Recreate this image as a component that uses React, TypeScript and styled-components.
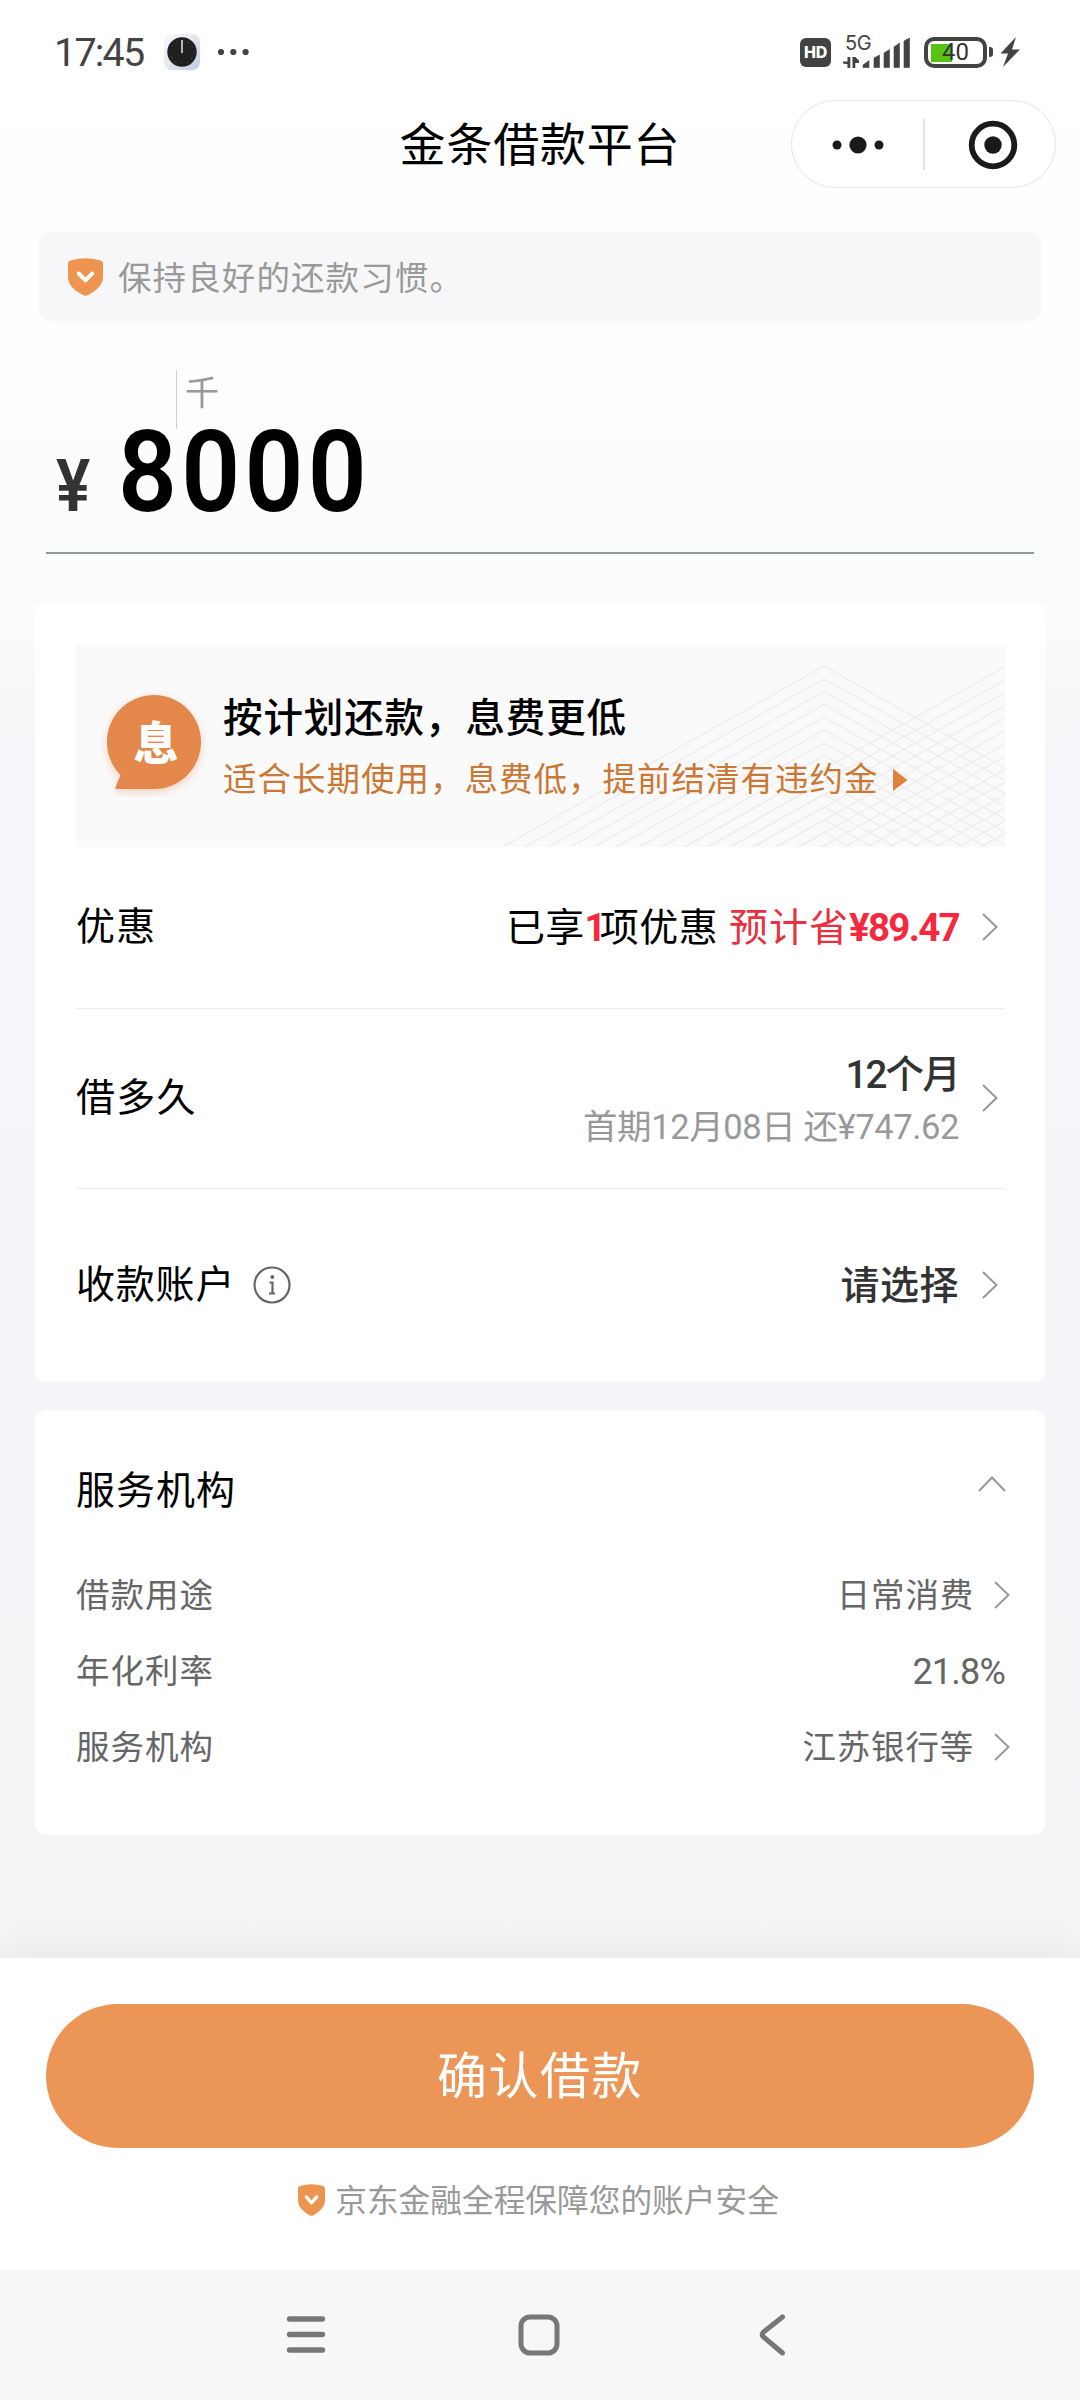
import React from 'react';
import styled, { createGlobalStyle } from 'styled-components';

const GlobalStyle = createGlobalStyle`
  * { box-sizing: border-box; }
  body {
    margin: 0;
    background: #fff;
    font-family: Roboto, "Noto Sans CJK SC", sans-serif;
    -webkit-font-smoothing: antialiased;
  }
`;

const Screen = styled.div`
  width: 1080px;
  height: 2400px;
  display: flex;
  flex-direction: column;
  overflow: hidden;
  background: linear-gradient(180deg, #ffffff 0, #fefefe 230px, #fbfcfc 560px, #f9fafa 640px, #f5f6f9 760px, #f4f5f7 1960px);
`;

interface TextProps {
  $size: number;
  $color?: string;
  $weight?: number;
  $spacing?: number;
  $drop?: number;
}
const Text = styled.span<TextProps>`
  display: block;
  white-space: nowrap;
  line-height: 1.2;
  padding-top: ${(p) => p.$drop ?? 0}px;
  font-size: ${(p) => p.$size}px;
  color: ${(p) => p.$color ?? '#000'};
  font-weight: ${(p) => p.$weight ?? 400};
  letter-spacing: ${(p) => p.$spacing ?? 0}px;
`;

/* ---------- status bar ---------- */
const StatusBar = styled.header`
  height: 100px;
  flex: none;
  display: flex;
  align-items: center;
  justify-content: space-between;
  padding: 4px 59px 0 54px;
`;
const StatusGroup = styled.div`
  display: flex;
  align-items: center;
`;
const AppIcon = styled.svg`
  margin-left: 21px;
`;
const MoreDots = styled.svg`
  margin-left: 17px;
`;
const HdBadge = styled.div`
  width: 31px;
  height: 29px;
  border-radius: 6px;
  background: #434343;
  color: #fff;
  font: 800 16px/29px Inter, sans-serif;
  text-align: center;
  letter-spacing: -0.3px;
`;
const Signal = styled.div`
  display: grid;
  margin-left: 12px;
  width: 67px;
  height: 34px;
  & > * { grid-area: 1 / 1; }
`;
const NetLabel = styled.span`
  font: 400 20px/17px Inter, sans-serif;
  letter-spacing: -0.5px;
  color: #434343;
  padding-left: 2px;
`;
const Battery = styled.div`
  display: flex;
  align-items: center;
  justify-content: center;
  width: 63px;
  height: 31px;
  margin-left: 14px;
  border: 4px solid #434343;
  border-radius: 10px;
  background: linear-gradient(90deg, #57c411 21px, transparent 21px) 3px 3px / 49px 18px no-repeat;
  font: 400 24px/23px Roboto, sans-serif;
  color: #333;
`;
const BatteryNub = styled.div`
  width: 4px;
  height: 10px;
  margin-left: 2px;
  border-radius: 0 3px 3px 0;
  background: #434343;
`;

/* ---------- title bar ---------- */
const TitleBar = styled.div`
  height: 88px;
  flex: none;
  display: grid;
  grid-template-columns: 1fr auto 1fr;
  align-items: center;
  padding: 0 24px;
`;
const Capsule = styled.div`
  grid-column: 3;
  justify-self: end;
  width: 265px;
  height: 88px;
  border: 1.5px solid #e6e6e6;
  border-radius: 44px;
  display: grid;
  grid-template-columns: 131px 2px 1fr;
  align-items: center;
  background: #fff;
`;
const CapsuleHalf = styled.div<{ $shift?: number }>`
  display: flex;
  justify-content: center;
  padding: 1px 0 0 ${(p) => p.$shift ?? 0}px;
`;
const CapsuleSplit = styled.div`
  width: 1.5px;
  height: 51px;
  background: #e4e4e4;
`;
const PageTitle = styled.h1`
  margin: 0;
  padding-top: 4px;
  font-size: 46px;
  font-weight: 400;
  line-height: 1.2;
  letter-spacing: 0.8px;
  color: #000;
`;

/* ---------- notice + amount ---------- */
const Notice = styled.div`
  flex: none;
  height: 89px;
  margin: 44px 39px 0;
  padding-left: 29px;
  border-radius: 12px;
  background: #f7f7fa;
  display: flex;
  align-items: center;
  gap: 15px;
`;
const AmountBox = styled.section`
  flex: none;
  height: 233px;
  margin: 0 46px;
  padding: 49px 0 0 10px;
  border-bottom: 2px solid #929997;
  display: flex;
  flex-direction: column;
`;
const UnitTag = styled.div`
  height: 59px;
  margin-left: 120px;
  padding: 0 0 13px 8px;
  border-left: 1px solid #d0d0d0;
  display: flex;
  align-items: center;
`;
const Unit = styled.span`
  font-size: 34px;
  line-height: 40px;
  color: #999;
`;
const AmountLine = styled.div`
  display: flex;
  align-items: baseline;
  height: 86px;
  line-height: 86px;
`;
const Currency = styled.span`
  font-size: 73px;
  font-weight: 600;
  color: #333;
  width: 62px;
  display: inline-block;
  transform: scaleX(0.88);
  transform-origin: left;
`;
const AmountValue = styled.span`
  font-size: 114px;
  font-weight: 600;
  letter-spacing: 4.8px;
  color: #000;
  transform: scaleX(0.905);
  transform-origin: left;
`;

/* ---------- cards ---------- */
const Card = styled.section<{ $height: number; $top: number; $radius: string }>`
  flex: none;
  height: ${(p) => p.$height}px;
  margin: ${(p) => p.$top}px 35px 0;
  padding: 0 40px 0 41px;
  border-radius: ${(p) => p.$radius};
  background: #fff;
  display: flex;
  flex-direction: column;
`;
const Banner = styled.div`
  flex: none;
  height: 202px;
  margin-top: 41px;
  display: grid;
  background: #fafafa;
  & > * { grid-area: 1 / 1; }
`;
const BannerContent = styled.div`
  display: flex;
  align-items: center;
  padding-left: 25px;
`;
const Bubble = styled.div`
  display: grid;
  width: 110px;
  height: 110px;
  margin-bottom: 8px;
  place-items: center;
  & > * { grid-area: 1 / 1; }
`;
const BubbleShape = styled.path`
  filter: drop-shadow(0 3px 4px rgba(227, 135, 75, 0.35));
`;
const BannerTexts = styled.div`
  display: flex;
  flex-direction: column;
  gap: 17px;
  padding: 3px 0 0 12px;
`;
const SubLine = styled.div`
  display: flex;
  align-items: center;
  gap: 14px;
`;
const Row = styled.div<{ $height: number; $line?: boolean; $shift?: number }>`
  flex: none;
  height: ${(p) => p.$height}px;
  padding-top: ${(p) => p.$shift ?? 0}px;
  display: flex;
  align-items: center;
  justify-content: space-between;
  border-bottom: ${(p) => (p.$line ? '1px solid #ececec' : 'none')};
`;
const RowSide = styled.div<{ $gap?: number; $pad?: number; $out?: number }>`
  display: flex;
  align-items: center;
  gap: ${(p) => p.$gap ?? 22}px;
  padding-right: ${(p) => p.$pad ?? 0}px;
  margin-right: ${(p) => -(p.$out ?? 0)}px;
`;
const Stack = styled.div`
  display: flex;
  flex-direction: column;
  align-items: flex-end;
  gap: 9px;
  padding-top: 4px;
`;
const Inline = styled.div`
  display: flex;
  align-items: baseline;
  padding-top: 2px;
`;

/* ---------- footer ---------- */
const Footer = styled.footer`
  flex: none;
  height: 312px;
  margin-top: 123px;
  padding: 46px 46px 0;
  background: #fff;
  box-shadow: 0 0 50px 4px rgba(0, 0, 0, 0.07);
  display: flex;
  flex-direction: column;
  align-items: center;
`;
const Confirm = styled.button`
  width: 988px;
  height: 144px;
  border: 0;
  padding: 0;
  border-radius: 72px;
  background: #eb9656;
  display: flex;
  align-items: center;
  justify-content: center;
  font-family: inherit;
`;
const Safety = styled.div`
  display: flex;
  align-items: center;
  gap: 10px;
  margin-top: 31px;
  padding-right: 3px;
`;
const NavBar = styled.nav`
  flex: none;
  height: 130px;
  background: #f7f7f7;
  display: flex;
  align-items: center;
  padding-left: 286px;
`;
const NavItem = styled.svg<{ $gap?: number }>`
  margin-left: ${(p) => p.$gap ?? 0}px;
`;

const Shield = ({ w, h }: { w: number; h: number }) => (
  <svg width={w} height={h} viewBox="0 0 35 38" preserveAspectRatio="none">
    <path d="M0 5.5Q0 3 2.5 2.4Q17.5 -2 32.5 2.4Q35 3 35 5.5V19C35 28 27 33.5 19.5 37.3Q17.5 38.3 15.5 37.3C8 33.5 0 28 0 19Z" fill="#ed9550" />
    <path d="M10.8 15.5L17.5 22.3L24.2 15.5" fill="none" stroke="#fff" strokeWidth="4" strokeLinecap="round" strokeLinejoin="round" />
  </svg>
);

const ChevronRight = () => (
  <svg width="16" height="28" viewBox="0 0 16 28" fill="none" stroke="#999" strokeWidth="2">
    <path d="M1 1L14.5 14L1 27" />
  </svg>
);

const peaks = Array.from({ length: 15 }, (_, i) => 21 + i * 12.8);
const slope = 0.563;

const BannerPattern = () => (
  <svg width="929" height="202" viewBox="-1 0 929 202" fill="none" stroke="#eeeeee" strokeWidth="1.5">
    {peaks.map((y) => (
      <g key={y}>
        <path d={`M${747 - 400} ${y + 400 * slope}L747 ${y}L${747 + 181} ${y + 181 * slope}`} />
        <path d={`M${928 - 400} ${y + 1 + 400 * slope}L928 ${y + 1}`} />
      </g>
    ))}
  </svg>
);

const DETAILS = [
  { label: '借款用途', value: '日常消费', arrow: true },
  { label: '年化利率', value: '21.8%', arrow: false },
  { label: '服务机构', value: '江苏银行等', arrow: true },
];

export default function App() {
  return (
    <Screen>
      <GlobalStyle />
      <StatusBar>
        <StatusGroup>
          <Text $size={39.5} $color="#434343" $spacing={-1.8} $drop={2}>17:45</Text>
          <AppIcon width="36" height="36" viewBox="0 0 36 36">
            <defs>
              <linearGradient id="tile" x1="0" y1="0" x2="1" y2="1">
                <stop offset="0" stopColor="#f8f9fb" />
                <stop offset="0.5" stopColor="#e2e7f0" />
                <stop offset="1" stopColor="#bccae2" />
              </linearGradient>
            </defs>
            <rect width="36" height="36" rx="8" fill="url(#tile)" />
            <circle cx="18" cy="18" r="14.7" fill="#202020" />
            <circle cx="18" cy="18" r="11.5" fill="none" stroke="#666" strokeWidth="1" strokeDasharray="1 5" />
            <path d="M18 6V19" stroke="#c8c8c8" strokeWidth="1.8" />
          </AppIcon>
          <MoreDots width="33" height="8" viewBox="0 0 33 8" fill="#434343">
            <circle cx="4" cy="4" r="3.1" />
            <circle cx="16.3" cy="4" r="3.1" />
            <circle cx="28.6" cy="4" r="3.1" />
          </MoreDots>
        </StatusGroup>
        <StatusGroup>
          <HdBadge>HD</HdBadge>
          <Signal>
            <svg width="67" height="34" viewBox="0 0 67 34" fill="#434343">
              <path d="M4.5 22H7.3V33H4.5V29.3L0 28.5V26.5H4.5Z" />
              <path d="M9.5 22H12.3L16 25.5V28H12.3V33H9.5Z" />
              <path d="M20 30L26 25.5V32.5H20ZM31 23L36.5 20V32.5H31ZM41 18L46.5 14.5V32.5H41ZM51 12L56.5 8V32.5H51ZM61 6L66.5 3V32.5H61Z" stroke="#434343" strokeWidth="0.6" strokeLinejoin="round" />
            </svg>
            <NetLabel>5G</NetLabel>
          </Signal>
          <Battery>40</Battery>
          <BatteryNub />
          <svg width="28" height="32" viewBox="0 0 28 32" fill="#434343">
            <path d="M23 1L7.5 17.5H15L10 31L27 13.5H19Z" />
          </svg>
        </StatusGroup>
      </StatusBar>

      <TitleBar>
        <span />
        <PageTitle>金条借款平台</PageTitle>
        <Capsule>
          <CapsuleHalf>
            <svg width="52" height="20" viewBox="0 0 52 20" fill="#1a1a1a">
              <circle cx="5" cy="10" r="4.5" />
              <circle cx="26" cy="10" r="8.6" />
              <circle cx="47" cy="10" r="4.5" />
            </svg>
          </CapsuleHalf>
          <CapsuleSplit />
          <CapsuleHalf $shift={6}>
            <svg width="50" height="50" viewBox="0 0 50 50">
              <circle cx="25" cy="25" r="21.3" fill="none" stroke="#1a1a1a" strokeWidth="5.8" />
              <circle cx="25" cy="25" r="8.7" fill="#1a1a1a" />
            </svg>
          </CapsuleHalf>
        </Capsule>
      </TitleBar>

      <Notice>
        <Shield w={35} h={38} />
        <Text $size={33.5} $color="#999" $spacing={1.1} $drop={5}>保持良好的还款习惯。</Text>
      </Notice>

      <AmountBox>
        <UnitTag>
          <Unit>千</Unit>
        </UnitTag>
        <AmountLine>
          <Currency>¥</Currency>
          <AmountValue>8000</AmountValue>
        </AmountLine>
      </AmountBox>

      <Card $height={778} $top={50} $radius="4px 4px 12px 12px">
        <Banner>
          <BannerPattern />
          <BannerContent>
            <Bubble>
              <svg width="110" height="110" viewBox="0 0 110 110">
                <BubbleShape d="M53 8A47 47 0 0 1 53 102H15Q14 102 14.5 100.5L19.5 88A47 47 0 0 1 53 8Z" fill="#e3874b" />
              </svg>
              <Text $size={45} $color="#fff" $weight={800} $drop={5}>息</Text>
            </Bubble>
            <BannerTexts>
              <Text $size={39.5} $weight={500} $spacing={0.9}>按计划还款，息费更低</Text>
              <SubLine>
                <Text $size={33.5} $color="#ca7835" $spacing={1}>适合长期使用，息费低，提前结清有违约金</Text>
                <svg width="15" height="22" viewBox="0 0 15 22"><path d="M0 0L14.5 11L0 22Z" fill="#e0813f" /></svg>
              </SubLine>
            </BannerTexts>
          </BannerContent>
        </Banner>

        <Row $height={162} $line>
          <Text $size={39} $spacing={1.2}>优惠</Text>
          <RowSide $gap={23} $pad={7}>
            <Inline>
              <Text $size={39} $spacing={0.2}>已享</Text>
              <Text $size={38} $weight={700} $color="#f5293d" $spacing={-6.5}>1</Text>
              <Text $size={39} $spacing={0.5}>项优惠</Text>
              <Text $size={39} $color="#e8303f" $spacing={1}>&nbsp;预计省</Text>
              <Text $size={38.5} $weight={700} $color="#f5293d" $spacing={-1.7}>¥89.47</Text>
            </Inline>
            <ChevronRight />
          </RowSide>
        </Row>
        <Row $height={180} $line>
          <Text $size={39} $spacing={1.2}>借多久</Text>
          <RowSide $gap={23} $pad={7}>
            <Stack>
              <Text $size={38.5} $weight={500} $color="#333" $spacing={-1.8}>12个月</Text>
              <Text $size={34.5} $color="#999" $spacing={-0.4}>首期12月08日 还¥747.62</Text>
            </Stack>
            <ChevronRight />
          </RowSide>
        </Row>
        <Row $height={193}>
          <RowSide $gap={18}>
            <Text $size={39} $spacing={0.8}>收款账户</Text>
            <svg width="38" height="38" viewBox="0 0 38 38" fill="none" stroke="#666" strokeWidth="2.2">
              <circle cx="19" cy="19" r="17.5" />
              <path d="M16.5 16.5H19.5V27M16 27.5H22" />
              <circle cx="19.3" cy="11" r="2" fill="#666" stroke="none" />
            </svg>
          </RowSide>
          <RowSide $gap={23} $pad={7}>
            <Text $size={39} $weight={500} $color="#333" $spacing={0.5} $drop={2}>请选择</Text>
            <ChevronRight />
          </RowSide>
        </Row>
      </Card>

      <Card $height={425} $top={28} $radius="12px">
        <Row $height={147} $shift={12}>
          <Text $size={39} $spacing={1} $drop={3}>服务机构</Text>
          <RowSide $out={1}>
            <svg width="28" height="28" viewBox="0 0 28 28" fill="none" stroke="#999" strokeWidth="2">
              <path d="M1 15L14 1.5L27 15" />
            </svg>
          </RowSide>
        </Row>
        {DETAILS.map((item) => (
          <Row key={item.label} $height={76}>
            <Text $size={33.5} $color="#666" $spacing={1} $drop={3}>{item.label}</Text>
            <RowSide $gap={20} $out={item.arrow ? 5 : 0}>
              <Text
                $size={item.arrow ? 33.5 : 36}
                $color="#666"
                $spacing={item.arrow ? 0.8 : -0.8}
                $drop={3}
              >
                {item.value}
              </Text>
              {item.arrow && <ChevronRight />}
            </RowSide>
          </Row>
        ))}
      </Card>

      <Footer>
        <Confirm>
          <Text $size={50} $color="#fff" $spacing={1.5} $drop={1}>确认借款</Text>
        </Confirm>
        <Safety>
          <Shield w={27} h={32} />
          <Text $size={31.7} $color="#999" $drop={4}>京东金融全程保障您的账户安全</Text>
        </Safety>
      </Footer>

      <NavBar>
        <NavItem width="40" height="42" viewBox="0 0 40 42" stroke="#777" strokeWidth="5.3" strokeLinecap="round">
          <path d="M3.5 5H36.5M3.5 20.5H36.5M3.5 36H36.5" />
        </NavItem>
        <NavItem $gap={192} width="42" height="42" viewBox="0 0 42 42" fill="none" stroke="#777" strokeWidth="5">
          <rect x="3" y="3" width="36" height="36" rx="9" />
        </NavItem>
        <NavItem $gap={198} width="28" height="42" viewBox="0 0 28 42" fill="none" stroke="#777" strokeWidth="5" strokeLinecap="round">
          <path d="M24.5 3L5.5 18Q3 20.5 5.5 23L24.5 39" />
        </NavItem>
      </NavBar>
    </Screen>
  );
}
